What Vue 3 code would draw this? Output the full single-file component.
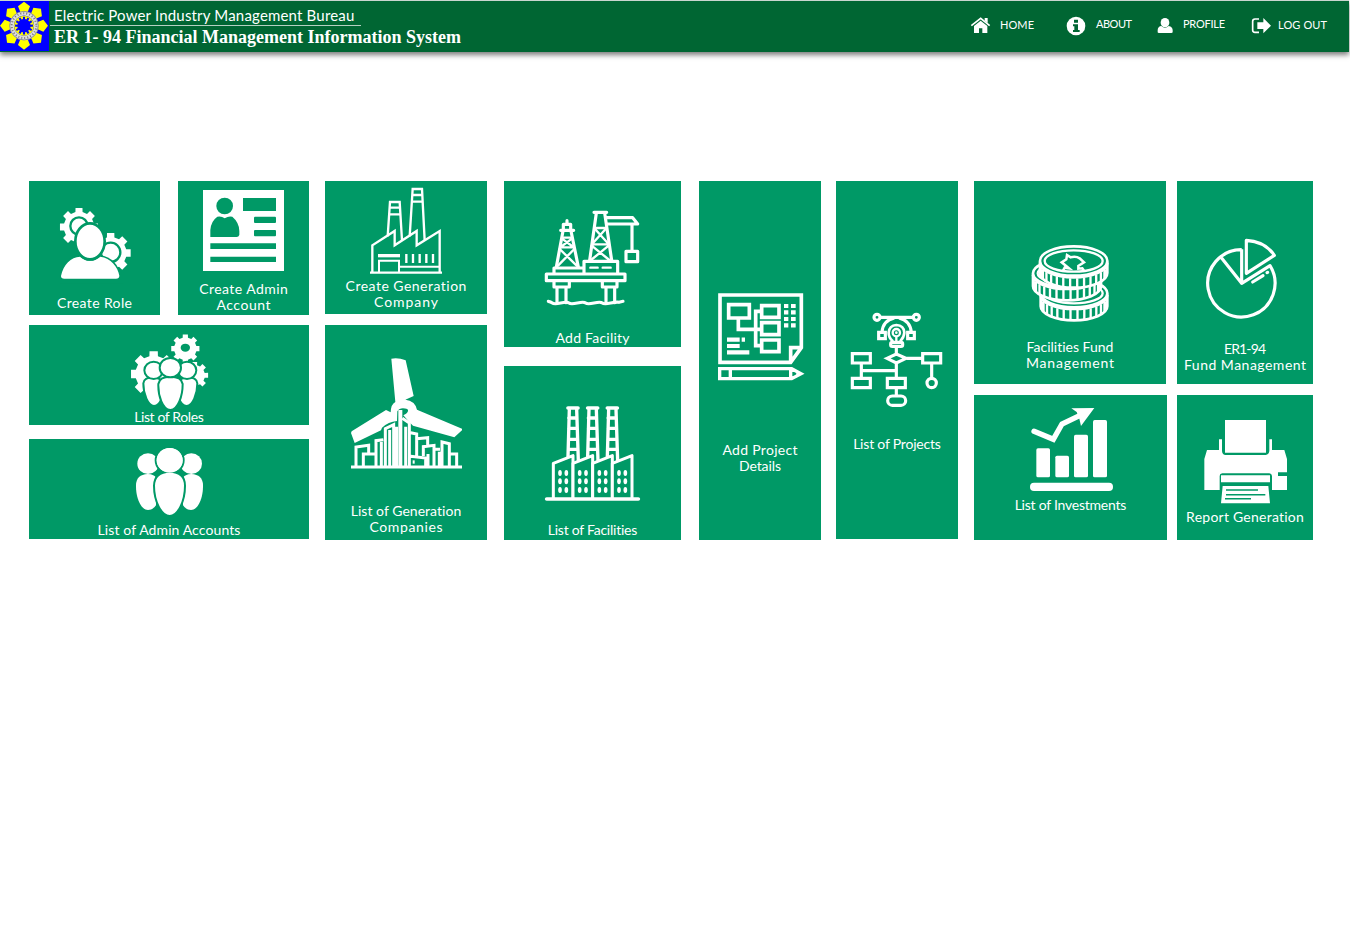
<script setup>
const canvas = document.createElement('canvas').getContext('2d')

// Spreads the letters of a line so that it takes the given width.
function fit(text, width, font = '14px Lato') {
  canvas.font = font
  const gap = (width - canvas.measureText(text).width) / (text.length - 1)
  return { letterSpacing: gap.toFixed(3) + 'px', marginRight: (-gap).toFixed(3) + 'px' }
}

function gear(cx, cy, outer, inner, teeth) {
  const pts = []
  const step = (Math.PI * 2) / teeth
  for (let i = 0; i < teeth; i++) {
    const a = i * step - Math.PI / 2
    for (const [r, k] of [[inner, -0.3], [outer, -0.23], [outer, 0.23], [inner, 0.3]]) {
      pts.push((cx + r * Math.cos(a + k * step)).toFixed(1) + ',' + (cy + r * Math.sin(a + k * step)).toFixed(1))
    }
  }
  return 'M' + pts.join('L') + 'Z'
}

// Milled edge of a coin.
function ticks(cx, cy, rx, ry, h) {
  let d = ''
  for (let i = 1; i < 15; i++) {
    const a = (Math.PI * i) / 15
    const x = cx + rx * Math.cos(a)
    const y = cy + ry * Math.sin(a)
    d += `M${x.toFixed(1)},${y.toFixed(1)}v${h}`
  }
  return d
}

function coin(cx, cy, rx, ry, h) {
  return `M${cx - rx},${cy}v${h}A${rx},${ry} 0 0 0 ${cx + rx},${cy + h}v${-h}A${rx},${ry} 0 0 0 ${cx - rx},${cy}A${rx},${ry} 0 0 0 ${cx + rx},${cy}`
}

const petals = [0, 45, 90, 135, 180, 225, 270, 315]
const stacks = [0, 59, 118]
const halls = [0, 59, 118, 177]
const coins = [
  { x: 312, y: 190, rx: 100, ry: 42, h: 39 },
  { x: 291, y: 130, rx: 102, ry: 42, h: 39 },
  { x: 311, y: 93, rx: 101, ry: 44, h: 36 },
]
const L = {
  role: [['Create Role', 75]],
  admin: [['Create Admin', 89], ['Account', 54]],
  roles: [['List of Roles', 70]],
  admins: [['List of Admin Accounts', 144]],
  gen: [['Create Generation', 121], ['Company', 64]],
  gens: [['List of Generation', 111], ['Companies', 73]],
  fac: [['Add Facility', 74]],
  facs: [['List of Facilities', 90]],
  proj: [['Add Project', 75], ['Details', 42]],
  projs: [['List of Projects', 88]],
  fund: [['Facilities Fund', 87], ['Management', 88]],
  inv: [['List of Investments', 112]],
  er: [['ER1-94', 42], ['Fund Management', 122]],
  rep: [['Report Generation', 118]],
}
</script>

<template>
  <header class="bar">
    <svg class="logo" viewBox="0 3 147 150">
      <rect y="3" width="147" height="150" fill="#00f" />
      <g fill="#ff0">
        <path v-for="p in petals" :key="p" :transform="`rotate(${p} 72 77)`" d="M61,36L54,19L72,5L90,19L83,36Z" />
      </g>
      <circle cx="72" cy="77" r="37" fill="none" stroke="#ddd" stroke-width="13" />
      <circle cx="72" cy="77" r="37" fill="none" stroke="#777" stroke-width="6" stroke-dasharray="3 6" />
      <circle cx="72" cy="77" r="43" fill="none" stroke="#667" stroke-width="2" />
      <circle cx="72" cy="77" r="30" fill="#ff0" />
      <path :d="gear(72, 77, 27, 20, 12)" fill="#00f" />
    </svg>
    <div class="brand">
      <div class="bureau"><span :style="fit('Electric Power Industry Management Bureau', 301, '15px Lato')">Electric Power Industry Management Bureau</span></div>
      <div class="system"><span :style="fit('ER 1- 94 Financial Management Information System', 407, 'bold 18px Liberation Serif')">ER 1- 94 Financial Management Information System</span></div>
    </div>
    <nav>
      <a class="home">
        <svg width="21" height="51" viewBox="60 3 63 153" fill="#fff">
          <path d="M72,78L92,62L112,78V99H97V85H87V99H72Z" />
          <path d="M64,77L92,55L119,77" fill="none" stroke="#fff" stroke-width="5" />
          <path d="M104,54h9v15l-9,-7z" />
        </svg>
        <span :style="fit('HOME', 34, '11px Lato')">HOME</span>
      </a>
      <a class="about">
        <svg width="20" height="51" viewBox="349 3 60 153">
          <circle cx="379" cy="78" r="28" fill="#fff" />
          <path d="M373,59h12v9h-12zM370,73h15v17h5v6h-20v-6h4v-11h-4z" fill="#063" />
        </svg>
        <span :style="fit('ABOUT', 36, '11px Lato')">ABOUT</span>
      </a>
      <a class="profile">
        <svg width="16" height="51" viewBox="622 3 48 153" fill="#fff">
          <ellipse cx="646" cy="68" rx="13" ry="14" />
          <path d="M624,97V90Q625,79 635,78Q646,88 657,78Q669,80 669,91V97Q668,99 665,99H628Q624,99 624,97Z" />
        </svg>
        <span :style="fit('PROFILE', 42, '11px Lato')">PROFILE</span>
      </a>
      <a class="logout">
        <svg width="20" height="51" viewBox="903 3 60 153" fill="#fff">
          <path d="M927,57H915Q908,57 908,64V91Q908,97 915,97H927" fill="none" stroke="#fff" stroke-width="5" />
          <path d="M922,67H940V54L963,77L940,100V87H922Z" />
        </svg>
        <span :style="fit('LOG OUT', 49, '11px Lato')">LOG OUT</span>
      </a>
    </nav>
  </header>

  <main>
    <section class="col c1">
      <div class="pair">
        <div class="tile t-role">
          <svg width="131" height="114" viewBox="27 18 393 342" fill="#fff">
            <path :d="gear(177, 156, 58, 46, 8)" />
            <circle cx="177" cy="153" r="26" stroke="#096" stroke-width="7" />
            <path :d="gear(272, 234, 61, 48, 8)" />
            <circle cx="272" cy="232" r="29" stroke="#096" stroke-width="7" />
            <path d="M119,304C126,268 150,241 181,241H240C274,245 298,271 302,303Q302,315 289,315H132Q119,315 119,304Z" fill="#096" />
            <path d="M120,300H310V325H120Z" fill="#096" />
            <path d="M123,303C130,268 153,246 180,245Q210,270 241,245C272,249 294,276 298,302Q298,311 288,311H133Q123,311 123,303Z" />
            <ellipse cx="210" cy="199" rx="44" ry="54" stroke="#096" stroke-width="8" />
          </svg>
          <p v-for="l in L.role" :key="l[0]"><span :style="fit(...l)">{{ l[0] }}</span></p>
        </div>
        <div class="tile t-admin">
          <svg width="131" height="100" viewBox="474 18 393 300">
            <rect x="549" y="45" width="243" height="243" fill="#fff" />
            <g fill="#096">
              <circle cx="614" cy="93" r="25" />
              <path d="M571,186V165Q573,138 592,125Q604,122 614,130Q626,122 637,125Q658,143 658,168V180Q656,186 650,186Z" />
              <path d="M669,69h99v39h-99zM571,205h197v17h-197zM571,245h197v16h-197z" />
              <rect x="702" y="125" width="66" height="19" rx="3" />
              <rect x="702" y="165" width="66" height="19" rx="3" />
            </g>
          </svg>
          <p v-for="l in L.admin" :key="l[0]"><span :style="fit(...l)">{{ l[0] }}</span></p>
        </div>
      </div>
      <div class="tile t-roles">
        <svg width="280" height="84" viewBox="27 15 840 252" fill="#fff">
          <path :d="gear(496, 86, 43, 34, 8)" />
          <ellipse cx="496" cy="83" rx="14" ry="12" fill="#096" />
          <path :d="gear(401, 162, 69, 55, 8)" />
          <path d="M370,210h70v34h-70z" fill="#096" />
          <path :d="gear(524, 166, 41, 31, 8)" />
          <g stroke="#096" stroke-width="6">
            <path d="M370,190Q372,172 401,172Q420,174 425,185V235Q417,258 402,258C384,258 370,222 370,190Z" />
            <path d="M532,190Q530,172 502,172Q482,174 477,185V235Q485,258 500,258C518,258 532,222 532,190Z" />
            <ellipse cx="401" cy="151" rx="28" ry="26" />
            <ellipse cx="501" cy="151" rx="28" ry="26" />
            <path d="M415,192Q418,170 451,170Q485,170 488,192C488,228 474,270 451,270C428,270 414,228 415,192Z" />
            <ellipse cx="451" cy="143" rx="32" ry="29" />
          </g>
        </svg>
        <p v-for="l in L.roles" :key="l[0]"><span :style="fit(...l)">{{ l[0] }}</span></p>
      </div>
      <div class="tile t-admins">
        <svg width="280" height="83" viewBox="27 357 840 249" fill="#fff">
          <ellipse cx="384" cy="431" rx="32" ry="31" />
          <ellipse cx="514" cy="431" rx="32" ry="31" />
          <path d="M348,495Q349,464 383,462Q404,463 408,474V556Q399,570 384,570C362,570 347,532 348,495Z" />
          <path d="M549,495Q548,464 514,462Q494,463 489,474V556Q498,570 513,570C535,570 550,532 549,495Z" />
          <g stroke="#096" stroke-width="6">
            <ellipse cx="449" cy="421" rx="42" ry="40" />
            <path d="M402,497Q403,456 449,455Q495,456 495,497C495,543 474,588 449,588C424,588 402,543 402,497Z" />
          </g>
          <ellipse cx="449" cy="421" rx="39" ry="37" />
        </svg>
        <p v-for="l in L.admins" :key="l[0]"><span :style="fit(...l)">{{ l[0] }}</span></p>
      </div>
    </section>

    <section class="col c2">
      <div class="tile t-gen">
        <svg width="162" height="97" viewBox="15 18 486 291" fill="none" stroke="#fff" stroke-width="7">
          <path d="M150,293H366M157,293V211L224,168V211L290,168V211L359,168V293" />
          <path d="M203,184L210,81H239L246,196M269,184L278,42H306L314,196" />
          <path d="M208,98H241M207,118H242M277,60H308M275,80H309" />
          <path d="M174,242H240" stroke-width="10" />
          <path d="M177,293V257H237V293M240,275H359" stroke-width="6" />
          <path d="M259,237V264M279,237V264M299,237V264M319,237V264M339,237V264" />
        </svg>
        <p v-for="l in L.gen" :key="l[0]"><span :style="fit(...l)">{{ l[0] }}</span></p>
      </div>
      <div class="tile t-gens">
        <svg width="162" height="178" viewBox="15 15 486 534" fill="none" stroke="#fff" stroke-width="9">
          <path d="M214,116Q235,112 257,121L281,228L256,239Q285,242 291,269L426,326V331L403,352L279,317Q262,300 254,290L250,286Q270,276 262,267Q240,260 232,274L231,303Q205,305 186,323L183,331L104,369L93,339L95,334L198,270L212,277Q213,252 226,246Z" fill="#fff" stroke="none" />
          <path d="M93,441H426M108,441V381L146,376V400M130,441V402H168M168,441V362L190,359M184,366V441M196,441V326L221,314V441M209,330V441M230,320V441" />
          <path d="M241,270V441" stroke-width="12" />
          <path d="M247,295L268,309V441M257,320V441M272,338L290,342V408M290,356L323,353V380M310,408V380L342,376V441M324,402V441M345,388H360M358,441V395M366,441V366L388,371V441M390,402H410V441M272,409L317,414V441" />
          <path d="M278,421h6v10h-6z" fill="#fff" stroke="none" />
        </svg>
        <p v-for="l in L.gens" :key="l[0]"><span :style="fit(...l)">{{ l[0] }}</span></p>
      </div>
    </section>

    <section class="col c3">
      <div class="tile t-fac">
        <svg width="177" height="149" viewBox="12 18 531 447" fill="none" stroke="#fff" stroke-width="9.5" stroke-linejoin="round" stroke-linecap="round">
          <path d="M139,297H375V317H139ZM162,297V279H250M252,297V259H353V297" />
          <path d="M271,278H293M308,278H332" stroke-width="7" />
          <path d="M162,318V336H208V318M171,336V383M198,336V383M307,318V336H351V318M318,336V383M344,336V383" />
          <path d="M145,379Q152,380 157,384T182,384T207,384T232,384T257,384T282,384T307,384T332,384T357,382L369,379" />
          <path d="M182,166H221M190,163V148H212V163M201,137V145M189,168L169,276M213,168L235,276" />
          <path d="M186,188H216M181,217H221M186,191L220,216M216,191L182,216M179,222L230,272M223,222L174,272" stroke-width="7" />
          <path d="M282,112H320M289,114L269,256M314,114L335,256M318,128H398L413,147H322M396,149V228M378,229H413V260H378Z" />
          <path d="M284,159H318M277,208H325M285,162L323,204M317,162L279,204M275,212L328,255M326,212L273,255" stroke-width="7" />
        </svg>
        <p v-for="l in L.fac" :key="l[0]"><span :style="fit(...l)">{{ l[0] }}</span></p>
      </div>
      <div class="tile t-facs">
        <svg width="177" height="156" viewBox="12 18 531 468" fill="none" stroke="#fff" stroke-width="9" stroke-linecap="round" stroke-linejoin="round">
          <g v-for="x in stacks" :key="x" :transform="`translate(${x})`">
            <path d="M204,144H234" stroke-width="11" />
            <path d="M208,148L204,290M230,148L235,302M206,174H231M206,205H231M206,238H232M205,268H234" stroke-width="10" />
          </g>
          <g v-for="x in halls" :key="x" :transform="`translate(${x})`">
            <path d="M160,415V310L219,287V415" fill="#096" />
            <g fill="#fff" stroke="none">
              <ellipse cx="180" cy="339" rx="5.5" ry="9" /><ellipse cx="199" cy="339" rx="5.5" ry="9" />
              <ellipse cx="180" cy="364" rx="5.5" ry="9" /><ellipse cx="199" cy="364" rx="5.5" ry="9" />
              <ellipse cx="180" cy="390" rx="5.5" ry="9" /><ellipse cx="199" cy="390" rx="5.5" ry="9" />
            </g>
          </g>
          <path d="M140,417H415" stroke-width="11" />
        </svg>
        <p v-for="l in L.facs" :key="l[0]"><span :style="fit(...l)">{{ l[0] }}</span></p>
      </div>
    </section>

    <section class="col c4">
      <div class="tile t-proj">
        <svg width="122" height="261" viewBox="12 -297 366 783" fill="none" stroke="#fff" stroke-width="11">
          <path d="M75,45H319V203L287,247H75ZM287,245V203H319" />
          <path d="M101,74H163V114H101ZM200,77H252V112H200ZM200,128H252V164H200ZM200,180H252V215H200ZM130,114V148H200M200,94H182V197H200" stroke-width="11" />
          <path d="M267,78h13m8,0h14M267,97h13m8,0h14M267,117h13m8,0h14M267,136h13m8,0h14M96,179h38m6,0h10M96,198h38M96,217h67" stroke-width="12.5" />
          <path d="M74,266H290L318,281L290,296H74ZM106,266V296M287,266V296" stroke-width="10" />
          <path d="M304,272L324,281L304,290Z" fill="#fff" stroke="none" />
        </svg>
        <p v-for="l in L.proj" :key="l[0]"><span :style="fit(...l)">{{ l[0] }}</span></p>
      </div>
    </section>

    <section class="col c5">
      <div class="tile t-projs">
        <svg width="122" height="255" viewBox="12 -357 366 765" fill="none" stroke="#fff" stroke-width="9.5">
          <path d="M145,52H243M150,97Q152,62 187,54M238,97Q235,62 201,54" />
          <circle cx="135" cy="52" r="9" /><circle cx="253" cy="52" r="9" />
          <path d="M140,97H160V116H140ZM227,97H247V116H227Z" />
          <path d="M181,122Q170,112 170,98Q172,76 193,75Q216,76 217,98Q216,112 206,122V128H181Z" stroke-width="8" />
          <circle cx="193" cy="98" r="11" stroke-width="7" />
          <circle cx="193" cy="98" r="4" fill="#fff" stroke="none" />
          <path d="M193,108V128" stroke-width="7" />
          <rect x="176" y="127" width="36" height="12" rx="5" />
          <path d="M193,141V162M165,175L193,162L222,175L193,189ZM224,175H272M61,161H115V189H61ZM272,161H326V189H272ZM61,235H115V263H61ZM166,235H220V263H166ZM88,189V235M88,212H193M193,190V235M193,263V288M299,189V233" />
          <circle cx="299" cy="249" r="14" />
          <rect x="167" y="288" width="54" height="28" rx="14" />
        </svg>
        <p v-for="l in L.projs" :key="l[0]"><span :style="fit(...l)">{{ l[0] }}</span></p>
      </div>
    </section>

    <section class="col c6">
      <div class="tile t-fund">
        <svg width="192" height="158" viewBox="12 -147 576 474" fill="none" stroke="#fff" stroke-width="8">
          <g v-for="c in coins" :key="c.y">
            <path :d="coin(c.x, c.y, c.rx, c.ry, c.h)" fill="#096" />
            <path :d="ticks(c.x, c.y + 8, c.rx, c.ry, c.h - 8)" stroke-width="7" />
            <path :d="`M${c.x - c.rx},${c.y + 5}A${c.rx},${c.ry} 0 0 0 ${c.x + c.rx},${c.y + 5}`" />
            <ellipse :cx="c.x" :cy="c.y" :rx="c.rx - 14" :ry="c.ry - 12" stroke-width="7" />
          </g>
          <path d="M279,122L284,113L297,115L275,97L289,88L291,75L302,82Q318,78 329,85L342,97L325,108L325,116L337,115L342,122" stroke-width="7.5" />
        </svg>
        <p v-for="l in L.fund" :key="l[0]"><span :style="fit(...l)">{{ l[0] }}</span></p>
      </div>
      <div class="tile t-inv">
        <svg width="193" height="102" viewBox="12 15 579 306" fill="#fff">
          <rect x="199" y="175" width="41" height="87" rx="5" />
          <rect x="256" y="197" width="41" height="65" rx="5" />
          <rect x="312" y="134" width="42" height="128" rx="5" />
          <rect x="369" y="90" width="42" height="172" rx="5" />
          <rect x="180" y="278" width="249" height="25" rx="12" />
          <path d="M192,124L250,148L276,102L335,74" fill="none" stroke="#fff" stroke-width="16" stroke-linecap="round" />
          <path d="M304,55L373,54L333,108L328,86L320,66Z" />
        </svg>
        <p v-for="l in L.inv" :key="l[0]"><span :style="fit(...l)">{{ l[0] }}</span></p>
      </div>
    </section>

    <section class="col c7">
      <div class="tile t-er">
        <svg width="136" height="160" viewBox="621 -147 408 480" fill="none" stroke="#fff" stroke-width="9.5">
          <path d="M815,58V160L900,107A101,101 0 1 1 815,59M753,82L815,160M829,31V130L913,76Q885,34 829,31Z" stroke-linejoin="round" />
          <path d="M848,156L879,137M891,128l2,-1" stroke-linecap="round" />
        </svg>
        <p v-for="l in L.er" :key="l[0]"><span :style="fit(...l)">{{ l[0] }}</span></p>
      </div>
      <div class="tile t-rep">
        <svg width="136" height="114" viewBox="621 15 408 342" fill="#fff">
          <path d="M765,90H888V188H765Z" />
          <path d="M711,180H747V148H756V183Q757,195 767,195H887Q897,193 898,183V148H906V180H943L951,207V247H924V258H951V300H906V258Q905,250 898,250H757Q749,251 749,258V300H703V207Z" />
          <path d="M753,256H900V277H753ZM758,288H895L900,340H753Z" />
          <path d="M768,300H864M768,314H886M765,326H843" stroke="#096" stroke-width="4.5" />
        </svg>
        <p v-for="l in L.rep" :key="l[0]"><span :style="fit(...l)">{{ l[0] }}</span></p>
      </div>
    </section>
  </main>
</template>

<style>
body { margin: 0; background: #fff; }
</style>

<style scoped>
.bar { display: flex; box-sizing: border-box; width: 1349px; height: 52px; border-top: 1px solid #c9d6cf; background: #063; color: #fff; box-shadow: 0 3px 5px rgba(0, 0, 0, 0.5); font-family: Lato, sans-serif; }
.logo { display: block; width: 49px; height: 50px; }
.brand { width: 420px; margin-left: 1px; white-space: nowrap; }
.bureau { box-sizing: border-box; width: 311px; height: 25px; padding: 5px 0 0 4px; border-bottom: 1px solid #b5d0c2; font-size: 15px; line-height: 18px; }
.system { padding-left: 4px; font: bold 18px/22px "Liberation Serif", serif; }
nav { display: flex; margin-left: 500px; font-size: 11px; white-space: nowrap; }
nav a { display: flex; align-items: flex-start; }
nav a span { margin-top: 17px; line-height: 14px; }
nav svg { display: block; flex: none; }
.home { width: 96px; }
.home svg { margin-right: 9px; }
.about { width: 91px; }
.about svg { margin-right: 10px; }
.profile { width: 94px; }
.profile svg { margin-right: 10px; }
.logout svg { margin-right: 7px; }
.about span, .profile span { margin-top: 16px; }

main { display: flex; align-items: flex-start; padding: 129px 0 0 29px; font: 14px/16px Lato, sans-serif; }
.col { display: flex; flex-direction: column; flex: none; }
.tile { display: flex; flex-direction: column; align-items: center; background: #096; color: #fff; }
.tile svg { display: block; flex: none; }
.tile p { margin: 0; white-space: nowrap; }
.pair { display: flex; justify-content: space-between; }
.c1 { width: 280px; margin-right: 16px; }
.c2 { width: 162px; margin-right: 17px; }
.c3 { width: 177px; margin-right: 18px; }
.c4 { width: 122px; margin-right: 15px; }
.c5 { width: 122px; margin-right: 16px; }
.c6 { width: 193px; margin-right: 10px; }
.c7 { width: 136px; }
.t-role, .t-admin { width: 131px; height: 134px; }
.t-roles { height: 100px; margin-top: 10px; }
.t-admins { height: 100px; margin-top: 14px; }
.t-gen { height: 133px; }
.t-gens { height: 215px; margin-top: 11px; }
.t-fac { height: 166px; }
.t-facs { height: 174px; margin-top: 19px; }
.t-proj { height: 359px; }
.t-projs { height: 358px; }
.t-fund { width: 192px; height: 203px; }
.t-er { height: 203px; }
.t-inv, .t-rep { height: 145px; margin-top: 11px; }
</style>
